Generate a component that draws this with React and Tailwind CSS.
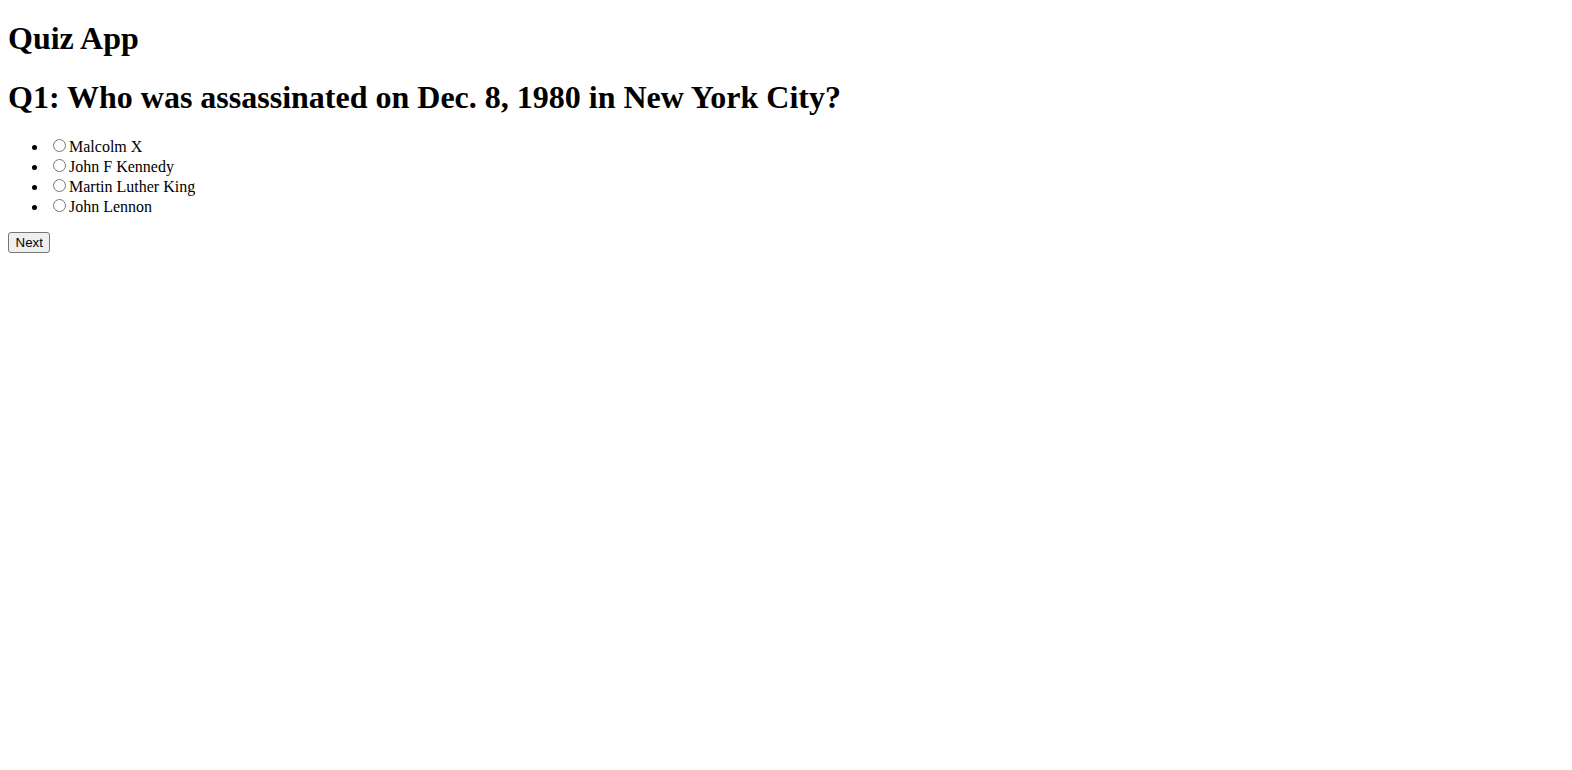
const options = ["Malcolm X", "John F Kennedy", "Martin Luther King", "John Lennon"];

export default function App() {
    return (
        <div className="px-2 font-['Liberation_Serif','Times_New_Roman',serif] text-base leading-[normal] text-black bg-white">
            <h1 className="text-[32px] font-bold mt-[20.44px] mb-[21.44px]">Quiz App</h1>
            <div>
                <h2 className="text-[32px] font-bold my-[19.92px]">Q1: Who was assassinated on Dec. 8, 1980 in New York City?</h2>
                <ul className="list-disc pl-10 my-4">
                    {options.map(opt => (
                        <li key={opt}>
                            <input type="radio" name="answer" value={opt} className="m-[3px_3px_0_5px]" />
                            {opt}
                        </li>
                    ))}
                </ul>
                <button className="font-['Liberation_Sans',Arial,sans-serif] text-[13.333px] leading-[normal] px-[6.5px] py-[2px] bg-[#efefef] border border-[#767676] rounded-[3px] text-black">
                    Next
                </button>
            </div>
        </div>
    );
}
